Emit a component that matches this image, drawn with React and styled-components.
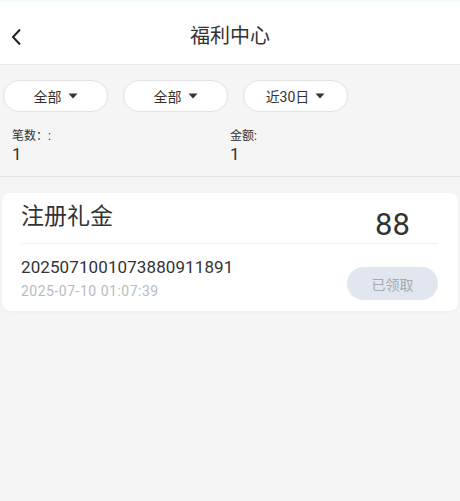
import React from 'react';
import styled, { createGlobalStyle } from 'styled-components';

const GlobalStyle = createGlobalStyle`
  html, body {
    margin: 0;
    padding: 0;
    background: #f5f5f5;
  }
  body {
    font-family: Roboto, "Noto Sans CJK SC", sans-serif;
    color: #333;
  }
  * {
    box-sizing: border-box;
  }
`;

const filters = ['全部', '全部', '近30日'];

const record = {
  title: '注册礼金',
  amount: '88',
  orderNo: '2025071001073880911891',
  time: '2025-07-10 01:07:39',
  status: '已领取',
};

const Caret = () => (
  <CaretSvg viewBox="0 0 10 6">
    <path d="M0.5 0.5 L9.5 0.5 L5 5.5 Z" fill="#333" />
  </CaretSvg>
);

const App = () => {
  return (
    <Page>
      <GlobalStyle />
      <Header>
        <BackButton aria-label="back">
          <svg width="12" height="18" viewBox="0 0 12 18">
            <polyline points="10,1.5 3,9 10,16.5" fill="none" stroke="#222" strokeWidth="2" />
          </svg>
        </BackButton>
        <Title>福利中心</Title>
      </Header>

      <FilterBar>
        {filters.map((label, index) => (
          <FilterPill key={index}>
            <span>{label}</span>
            <Caret />
          </FilterPill>
        ))}
      </FilterBar>

      <Stats>
        <StatItem>
          <StatLabel>笔数：:</StatLabel>
          <StatValue>1</StatValue>
        </StatItem>
        <StatItem>
          <StatLabel>金额:</StatLabel>
          <StatValue>1</StatValue>
        </StatItem>
      </Stats>

      <Card>
        <CardTop>
          <CardTitle>{record.title}</CardTitle>
          <Amount>{record.amount}</Amount>
        </CardTop>
        <CardBottom>
          <Info>
            <OrderNo>{record.orderNo}</OrderNo>
            <Time>{record.time}</Time>
          </Info>
          <StatusButton disabled>{record.status}</StatusButton>
        </CardBottom>
      </Card>
    </Page>
  );
};

const Page = styled.div`
  min-height: 501px;
  background: #f5f5f5;
`;

const Header = styled.header`
  position: relative;
  height: 65px;
  padding-top: 6px;
  display: flex;
  align-items: center;
  justify-content: center;
  background: #fff;
  border-top: 2px solid #f0fcfd;
  border-bottom: 1px solid #e8e8e8;
`;

const BackButton = styled.button`
  position: absolute;
  left: 10px;
  top: 26px;
  padding: 0;
  border: none;
  background: none;
  display: flex;
`;

const Title = styled.h1`
  margin: 0;
  font-size: 20px;
  font-weight: 400;
  color: #333;
  line-height: 28px;
`;

const FilterBar = styled.div`
  display: flex;
  gap: 15px;
  padding: 15px 0 0 3px;
`;

const FilterPill = styled.div`
  width: 105px;
  height: 32px;
  display: flex;
  align-items: center;
  justify-content: center;
  gap: 6px;
  background: #fff;
  border: 1px solid #e2e2e2;
  border-radius: 16px;
  font-size: 14px;
  color: #333;
`;

const CaretSvg = styled.svg`
  width: 10px;
  height: 6px;
`;

const Stats = styled.div`
  display: grid;
  grid-template-columns: 1fr 1fr;
  padding: 16px 12px 12px;
  border-bottom: 1px solid #e2e2e2;
`;

const StatItem = styled.div`
  display: flex;
  flex-direction: column;
`;

const StatLabel = styled.span`
  font-size: 12px;
  line-height: 16px;
  color: #333;
`;

const StatValue = styled.span`
  font-size: 17px;
  line-height: 20px;
  color: #333;
`;

const Card = styled.div`
  margin: 16px 2px 0;
  padding: 9px 20px 10px 19px;
  background: #fff;
  border-radius: 8px;
  box-shadow: 0 1px 3px rgba(0, 0, 0, 0.04);
`;

const CardTop = styled.div`
  display: flex;
  justify-content: space-between;
  min-height: 42px;
  border-bottom: 1px solid #f0f0f0;
`;

const CardTitle = styled.div`
  font-size: 23px;
  line-height: 30px;
  color: #333;
`;

const Amount = styled.div`
  align-self: flex-end;
  width: 91px;
  text-align: center;
  font-size: 31px;
  line-height: 36px;
  color: #333;
`;

const CardBottom = styled.div`
  display: flex;
  justify-content: space-between;
  align-items: flex-end;
  padding-top: 11px;
`;

const Info = styled.div`
  display: flex;
  flex-direction: column;
`;

const OrderNo = styled.div`
  font-size: 17px;
  line-height: 24px;
  letter-spacing: 0.1px;
  color: #333;
`;

const Time = styled.div`
  margin-top: 2px;
  font-size: 14px;
  line-height: 20px;
  letter-spacing: 0.5px;
  color: #b8bcc2;
`;

const StatusButton = styled.button`
  width: 91px;
  height: 33px;
  margin-bottom: 1px;
  border: none;
  border-radius: 17px;
  background: #e2e6ee;
  color: #a4a9b2;
  font-family: inherit;
  font-size: 14px;
`;

export default App;
